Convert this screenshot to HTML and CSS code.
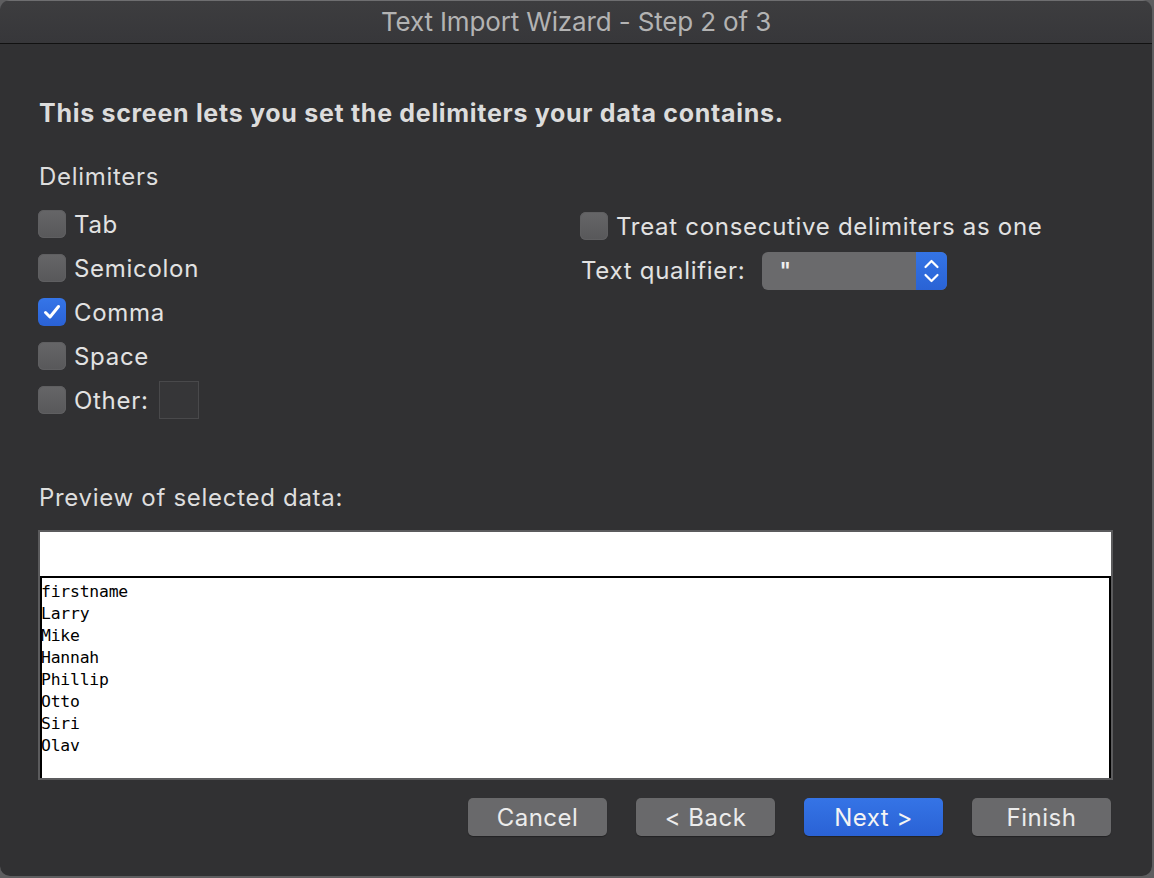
FILE: index.html
```html
<!DOCTYPE html>
<html>
<head>
<meta charset="utf-8">
<link rel="stylesheet" href="styles.css">
</head>
<body>
<div class="window">
  <div class="titlebar">Text Import Wizard - Step 2 of 3</div>
  <div class="content">
    <div class="heading">This screen lets you set the delimiters your data contains.</div>
    <div class="section-label">Delimiters</div>
    <div class="options">
      <div class="col-left">
        <div class="row"><span class="cb"></span><span class="lbl">Tab</span></div>
        <div class="row"><span class="cb"></span><span class="lbl">Semicolon</span></div>
        <div class="row"><span class="cb checked"><svg viewBox="0 0 28 28" width="28" height="28"><path d="M7.5 14.5 L12 19 L20.5 8.5" fill="none" stroke="#fff" stroke-width="3" stroke-linecap="round" stroke-linejoin="round"/></svg></span><span class="lbl">Comma</span></div>
        <div class="row"><span class="cb"></span><span class="lbl">Space</span></div>
        <div class="row"><span class="cb"></span><span class="lbl">Other:</span><span class="other-input"></span></div>
      </div>
      <div class="col-right">
        <div class="row row-treat"><span class="cb"></span><span class="lbl">Treat consecutive delimiters as one</span></div>
        <div class="row row-qual">
          <span class="lbl qual-lbl">Text qualifier:</span>
          <div class="select">
            <span class="select-val">"</span>
            <span class="select-arrows"><svg viewBox="0 0 31 38" width="31" height="38"><path d="M9.5 15 L15.5 9 L21.5 15" fill="none" stroke="#fff" stroke-width="2.2" stroke-linecap="round" stroke-linejoin="round"/><path d="M9.5 23 L15.5 29 L21.5 23" fill="none" stroke="#fff" stroke-width="2.2" stroke-linecap="round" stroke-linejoin="round"/></svg></span>
          </div>
        </div>
      </div>
    </div>
    <div class="section-label preview-label">Preview of selected data:</div>
    <div class="preview">
      <div class="preview-head"></div>
      <div class="preview-body">
        <div>firstname</div>
        <div>Larry</div>
        <div>Mike</div>
        <div>Hannah</div>
        <div>Phillip</div>
        <div>Otto</div>
        <div>Siri</div>
        <div>Olav</div>
      </div>
    </div>
    <div class="buttons">
      <div class="btn">Cancel</div>
      <div class="btn">&lt; Back</div>
      <div class="btn primary">Next &gt;</div>
      <div class="btn">Finish</div>
    </div>
  </div>
</div>
</body>
</html>
```

FILE: styles.css
```css
html, body {
  margin: 0;
  padding: 0;
  background: #5e5e60;
}
body {
  width: 1154px;
  height: 878px;
  overflow: hidden;
  font-family: Inter, "Liberation Sans", sans-serif;
}
.window {
  width: 1152px;
  height: 876px;
  background: #313133;
  border-radius: 10px;
  overflow: hidden;
  box-shadow: inset 0 1px 0 #6a6a6c;
}
.titlebar {
  border-bottom: 1px solid #111;
  background: linear-gradient(#3d3d3f, #37373a);
  border-top: 1px solid #6e6e70;
  box-sizing: border-box;
  height: 44px;
  color: #b3b3b3;
  font-size: 26px;
  text-align: center;
  line-height: 42px;
  letter-spacing: -0.15px;
}
.content {
  padding: 54px 41px 0 38px;
  color: #dedede;
}
.heading {
  font-weight: 700;
  font-size: 25px;
  line-height: 30px;
  letter-spacing: 0.7px;
  padding-left: 1px;
  color: #dcdcdc;
}
.section-label {
  margin-top: 34px;
  font-size: 24px;
  letter-spacing: 0.7px;
  line-height: 30px;
  padding-left: 1px;
}
.options {
  display: flex;
  margin-top: 10px;
}
.col-left {
  width: 542px;
}
.col-right {
  padding-top: 2px;
}
.row {
  height: 44px;
  display: flex;
  align-items: center;
}
.row-qual {
  height: 45px;
}
.cb {
  width: 28px;
  height: 28px;
  border-radius: 6px;
  background: linear-gradient(#666668, #58585a);
  box-shadow: inset 0 0 0 1px #5f5f61;
  flex: none;
}
.cb.checked {
  background: linear-gradient(#3575e8, #2a62d6);
  box-shadow: none;
}
.cb svg { display: block; }
.lbl {
  margin-left: 8px;
  font-size: 24px;
  letter-spacing: 0.7px;
  color: #e2e2e2;
}
.qual-lbl {
  margin-left: 1px;
}
.other-input {
  width: 38px;
  height: 36px;
  margin-left: 10px;
  background: #363638;
  border: 1px solid #49494b;
}
.select {
  margin-left: 17px;
  width: 185px;
  height: 38px;
  border-radius: 6px;
  background: #6a6a6c;
  display: flex;
  overflow: hidden;
}
.select-val {
  flex: 1;
  padding-left: 17px;
  color: #f0f0f0;
  font-size: 22px;
  line-height: 36px;
  font-weight: 600;
}
.select-arrows {
  width: 31px;
  background: linear-gradient(#3474e6, #2a63d5);
}
.select-arrows svg { display: block; }
.preview-label {
  margin-top: 61px;
}
.preview {
  margin-top: 17px;
  width: 1071px;
  height: 246px;
  border: 2px solid #5b5b5d;
  background: #fff;
  display: flex;
  flex-direction: column;
}
.preview-head {
  height: 44px;
  border-bottom: 2px solid #000;
  flex: none;
}
.preview-body {
  flex: 1;
  border-left: 2px solid #000;
  border-right: 2px solid #000;
  padding-top: 3px;
  font-family: "DejaVu Sans Mono", monospace;
  font-size: 16.4px;
  line-height: 22px;
  color: #000;
  letter-spacing: -0.2px;
  text-indent: -1px;
}
.buttons {
  margin-top: 18px;
  display: flex;
  justify-content: flex-end;
  gap: 29px;
}
.btn {
  width: 139px;
  height: 38px;
  border-radius: 5px;
  background: #69696b;
  color: #ececec;
  font-size: 24px;
  letter-spacing: 0.5px;
  line-height: 40px;
  text-align: center;
  box-shadow: 0 1px 1px rgba(0,0,0,0.3);
}
.btn.primary {
  background: linear-gradient(#3574e6, #2a62d5);
  color: #f4f4f4;
}
```
